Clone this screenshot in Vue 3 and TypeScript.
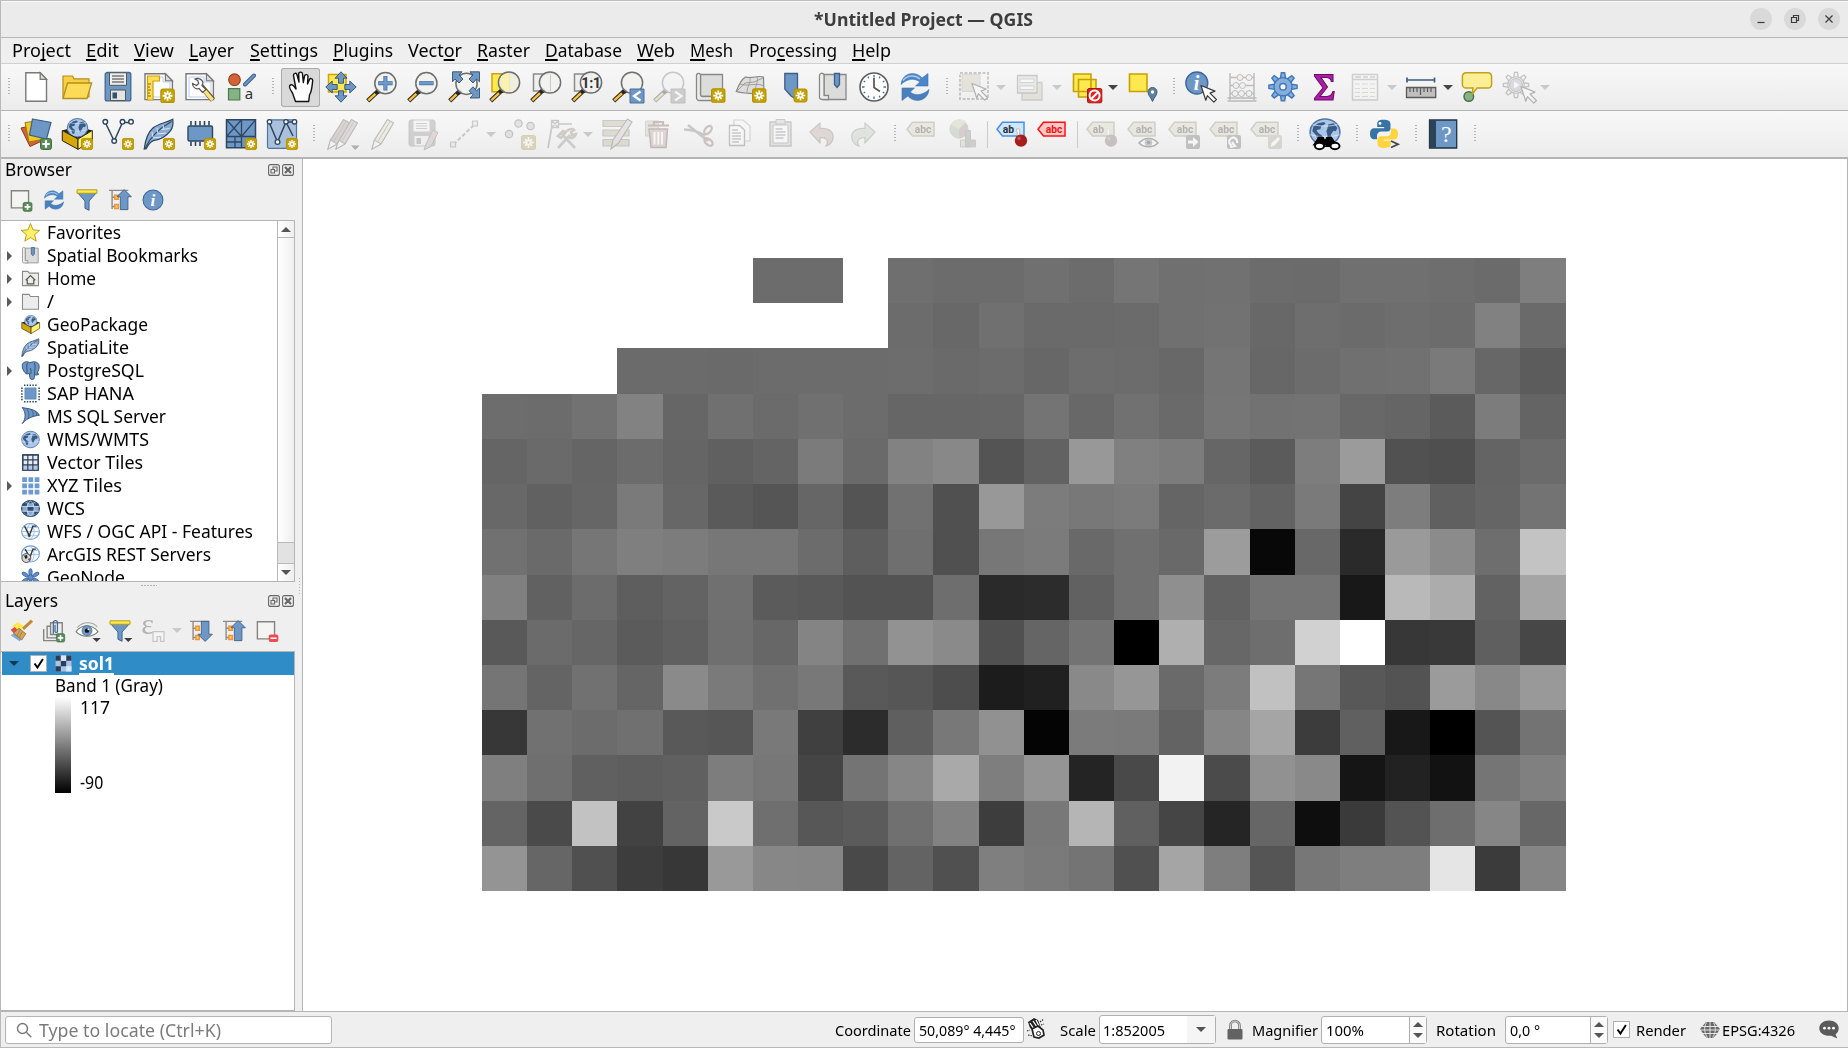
<script setup lang="ts">
import type { Directive } from 'vue'

// Sets a label in exactly the given width, whatever the metrics of the installed font.
const vFit: Directive<HTMLElement, number> = {
  mounted(el, binding) {
    const natural = el.getBoundingClientRect().width
    el.style.width = `${binding.value}px`
    el.style.transform = `scaleX(${binding.value / natural})`
  },
}

interface MenuItem { pre: string; key: string; post: string; w: number }
const menus: MenuItem[] = [
  { pre: 'Pro', key: 'j', post: 'ect', w: 59 },
  { pre: '', key: 'E', post: 'dit', w: 33 },
  { pre: '', key: 'V', post: 'iew', w: 40 },
  { pre: '', key: 'L', post: 'ayer', w: 45 },
  { pre: '', key: 'S', post: 'ettings', w: 68 },
  { pre: '', key: 'P', post: 'lugins', w: 60 },
  { pre: 'Vect', key: 'o', post: 'r', w: 54 },
  { pre: '', key: 'R', post: 'aster', w: 53 },
  { pre: '', key: 'D', post: 'atabase', w: 77 },
  { pre: '', key: 'W', post: 'eb', w: 38 },
  { pre: '', key: 'M', post: 'esh', w: 43 },
  { pre: 'Pro', key: 'c', post: 'essing', w: 88 },
  { pre: '', key: 'H', post: 'elp', w: 39 },
]

// ---- icon parts -------------------------------------------------------
const star = (x: number, y: number, s: number): string =>
  `<g transform="translate(${x} ${y}) scale(${s / 14})"><rect x=".5" y=".5" width="13" height="13" rx="2" fill="#c4a000" stroke="#b39200"/><path d="M7 2.2v9.6M2.2 7h9.6M3.8 3.8l6.4 6.4M10.2 3.8l-6.4 6.4" stroke="#fff" stroke-width="1.7"/><circle cx="7" cy="7" r="1.1" fill="#c4a000"/></g>`
const plus = (x: number, y: number, s: number): string =>
  `<g transform="translate(${x} ${y}) scale(${s / 12})"><rect x=".5" y=".5" width="11" height="11" rx="2" fill="#5a8c5a" stroke="#3f6f45"/><path d="M6 2.3v7.4M2.3 6h7.4" stroke="#fff" stroke-width="2.2"/></g>`
const lens = (cx = 19.4, cy = 12.2, fill = '#f2f2f1'): string =>
  `<path d="M${cx - 7} ${cy + 7.6}L1.7 29.9" stroke="#2b2b2b" stroke-width="4.4"/><path d="M${cx - 10} ${cy + 10.6}L2.3 29.3" stroke="#fcc33a" stroke-width="2.4"/><circle cx="${cx - 7}" cy="${cy + 8.2}" r="2.4" fill="#222"/><circle cx="${cx}" cy="${cy}" r="10.6" fill="${fill}" fill-opacity=".9" stroke="#6e6e6c" stroke-width="1.5"/>`
const cursor = (x: number, y: number): string =>
  `<path transform="translate(${x} ${y})" d="M0 0l14 5.6-5 2 6.4 6.4-2.6 2.6-6.4-6.4-1.6 4.6z" fill="#fff" stroke="#3a3a3a" stroke-width="1.2" stroke-linejoin="round"/>`
const page = `<path d="M5.8 1.8h14.4l6.3 6.5v21.9H5.8z" fill="#fff" stroke="#797977" stroke-width="1.4"/><path d="M20.2 1.8v6.5h6.3z" fill="#ddd" stroke="#797977" stroke-width="1.3"/>`
const widePage = `<path d="M2 2.8h20.4l7 7v18.8H2z" fill="#fff" stroke="#797977" stroke-width="1.4"/><path d="M22.4 2.8v7h7z" fill="#ddd" stroke="#797977" stroke-width="1.2"/><path d="M5 6h15v5h7v15H5z" fill="#fff" stroke="#b9cdf2"/>`
const tag = (label: string, fill: string, stroke: string, ink: string): string =>
  `<path d="M1 11.2L6.5 4.200H28V18H6.5z" fill="${fill}" stroke="${stroke}" stroke-width="1.5"/><text x="${label === 'ab' ? 12.5 : 17}" y="14.8" font-family="Roboto, sans-serif" font-size="10.3" font-weight="700" text-anchor="middle" fill="${ink}">${label}</text>`
const pin = (c: string): string =>
  `<path d="M23.6 17v-5.3a1.7 1.7 0 0 0-3.2 0l1 5" fill="#fff" stroke="#c4c4c4" stroke-width="1.2"/><circle cx="25" cy="22.6" r="6.2" fill="${c}"/><circle cx="23" cy="20.4" r="1.8" fill="#fff" opacity=".25"/>`
const globe = (cx: number, cy: number, rx: number, ry: number): string =>
  `<g transform="translate(${cx} ${cy}) scale(${rx / 10} ${ry / 10})"><circle r="9.6" fill="#a9c6e8" stroke="#5276a5" stroke-width="1"/><path d="M-7.5-4l3-2.5 4-1 .8 1.5-2.6 1.5-.7 2.5-2.5.5 1 2 2.5 2-1 3.5-1.5.5-1.5-4.5-2.2-2.500zM2-5.500l3.500-1 2.500 3.500-1 2.500-1.500-.5-1.500 2.500-.8 3-1.500-1.500-.8-3.500.8-2.500z" fill="#3b5b87"/><path d="M-9.600 2C-4 4 4 4 9.600 2M-8-5.500C-3-4 3-4 8-5.500" stroke="#e4eefa" stroke-width=".5" fill="none"/></g>`
const feather = `<path d="M1.2 31c1.2-9.4 3.3-16.4 9-21.2C15.2 5.6 23 4.8 29.8 1.200c.6 5.300.4 8.300-2.400 11.700-3.800 5-9.200 8.800-17 9.700-4 1.700-5.400 4.400-7.200 8.100z" fill="#89aad2" stroke="#2f4660" stroke-width="1.2"/><path d="M2 30.500C6.600 20 15 11 28.500 3.500" fill="none" stroke="#2f4660" stroke-width="1.1"/><path d="M10 20l8-1M14 16l9-1M18.500 11.500l8-1M9 14l1 5M14 9.500l.5 5M20 7l.5 3.500" stroke="#dce8f6" stroke-width="1" fill="none"/>`
const box = `<path d="M1.3 12.5L17 21l14.300-8.500L16 8z" fill="#222"/>${globe(16.5, 9.8, 10.6, 9.6)}<path d="M1.300 12.500L17 21v10.300L1.300 22.700z" fill="#d6a806" stroke="#2a2205"/><path d="M17 21l14.300-8.500v10.200L17 31.300z" fill="#fff271" stroke="#2a2205"/>`
const vee = `<path d="M3.3 4.5L12.2 23 20.500 4.500H29" fill="none" stroke="#2f4660" stroke-width="1.5"/><g fill="#fff" stroke="#2f4660" stroke-width="1.4"><circle cx="3.3" cy="3.8" r="2.3"/><circle cx="12.2" cy="23" r="2.3"/><circle cx="20.5" cy="3.8" r="2.3"/><circle cx="29" cy="3.8" r="2.3"/></g>`
const refresh = `<path d="M2 13.500C2.500 5.500 10 .8 17.500 3.200c2.400.8 4 2 5.500 3.800l6-4.500V15H16.500l4.300-4C15 6.200 7.500 8.300 2 13.500z" fill="#4a86c8" stroke="#3a73b3" stroke-width=".6"/><path d="M30 18.500C29.500 26.500 22 31.200 14.500 28.800c-2.400-.8-4-2-5.500-3.800l-6 4.500V17H15.500l-4.300 4c5.800 4.800 13.300 2.700 18.800-2.500z" fill="#4a7fbd" stroke="#3a73b3" stroke-width=".6"/><path d="M4 9.500C8 4 16 3.500 21 8" fill="none" stroke="#a9c9ea" stroke-width="1.5"/>`
const arrow4 = (s: string): string =>
  `<g fill="#6d97c4" stroke="#34506f" stroke-width=".9">${s}</g>`
const pencil = (x: number, c = '#d8c0a0'): string =>
  `<g transform="translate(${x} 0)"><path d="M1 31l2.500-9L16.500 1.500l6 3.500L10 26z" fill="${c}" stroke="#555" stroke-width="1.2"/><path d="M1 31l2.500-9 6.500 4z" fill="#f6f6f6" stroke="#555"/><path d="M6.500 24L19 3.500" stroke="#777"/></g>`
const gear = (cx: number, cy: number, r: number, fill: string, stroke: string): string => {
  let teeth = ''
  for (let a = 0; a < 8; a++) {
    teeth += `<path transform="rotate(${a * 45})" d="M-2.500-8l.9-5.600h3.200l.9 5.600z" />`
  }
  return `<g transform="translate(${cx} ${cy}) scale(${r / 14})"><g fill="${fill}" stroke="${stroke}" stroke-width="1.4">${teeth}<circle r="8.7"/></g><circle r="8" fill="${fill}"/></g>`
}
const treeLines = `<path d="M0 2h28M4.500 2v27M4.500 12h5M4.500 25.500h5" stroke="#8a8a88" stroke-width="2" fill="none"/><path d="M8.500 9h5v6h-5zM8.500 22.500h5v6h-5z" fill="#ffd08a" stroke="#f5932a" stroke-width="2.2"/>`
const funnel = `<path d="M2 5h28L19 17.500V31l-6-3V17.500z" fill="#6d97c4" stroke="#3c6290" stroke-width="1.4"/><path d="M1.500 1.200h29v5h-29z" fill="#ffe94f" stroke="#b09a12" stroke-width="1.4"/>`

const icons: Record<string, string> = {
  new: page,
  open: `<path d="M2 26V5h9.500l1.500 2.800h15V26z" fill="#f6cf45" stroke="#b58f1d" stroke-width="1.2"/><path d="M2 27.500L6.500 12H30.600L26 27.500z" fill="#fcdb58" stroke="#b58f1d" stroke-width="1.3"/>`,
  save: `<path d="M3.200 3.500a2 2 0 0 1 2-2h21.600a2 2 0 0 1 2 2v24.400a2 2 0 0 1-2 2H5.200a2 2 0 0 1-2-2z" fill="#6d97c4" stroke="#46668c" stroke-width="1.3"/><path d="M7.500 1.800h17v12.500h-17z" fill="#efefee" stroke="#555"/><path d="M10 5h12M10 8h12M10 11h12" stroke="#777" stroke-width="1.3"/><path d="M8.500 19h15v10.500h-15z" fill="#e4e4e2" stroke="#555"/><path d="M10.500 21.500h4.500v6h-4.500z" fill="#35506f"/>`,
  newlayout: `${widePage}<path d="M4.500 5h12v5H10v19H4.500z" fill="#ffdf55" stroke="#d0a012" stroke-width="1.2"/><path d="M5 13h3M5 16h2M5 19h3M5 22h2M5 25h3" stroke="#8a6c00"/>${star(17.3, 17.5, 14.5)}`,
  layoutmgr: `${widePage}<path d="M17 15l12 14" stroke="#6b5b1e" stroke-width="5.500"/><path d="M20 19l8.500 10" stroke="#fbe08a" stroke-width="3.500"/><path d="M11 8c3-1.500 7 0 8 3.500l-1 3 4 4-3.500 3-3.500-4c-3 1-6.500-1-6.500-5l4 2 2.200-2-1-3z" fill="#fff" stroke="#555" stroke-width="1.2"/>`,
  style: `<circle cx="9.500" cy="8.700" r="5.800" fill="#d2643a" stroke="#96401d" stroke-width="1.2"/><path d="M20 13.500L29 4.500" stroke="#3a5c88" stroke-width="4" stroke-linecap="round"/><path d="M20 13.500L29 4.500" stroke="#6d97c4" stroke-width="2.200" stroke-linecap="round"/><path d="M3.500 17.700h11.300V29H3.500z" fill="#84b384" stroke="#4c7a4c" stroke-width="1.2"/><text x="24" y="28.400" font-family="Noto Sans, sans-serif" font-size="15" text-anchor="middle" fill="#333">a</text>`,
  pan: `<path d="M11.500 30.500L8.500 22C6.500 19 4.500 16 5.800 14.500s3.500-.5 4.700 1.500l1.500 2L9.500 4.500c-.3-2.500 3-3 3.500-.7L15 11l-.3-8c0-2.500 3.500-2.500 3.800 0l.8 8.500L20.500 5c.5-2 3.500-1.700 3.500.4L23.500 13l2-4.500c.8-1.800 3.400-1 3.200 1.200C28 15 28 20 25.500 24l-.8 6.500z" fill="#fff" stroke="#111" stroke-width="1.4" stroke-linejoin="round"/>`,
  pansel: `<path d="M3.500 3.500h17.500v17.500h-17.500z" fill="#ffe94f" stroke="#cfa400" stroke-width="1.5"/>${arrow4('<path d="M16 .8l6 6.400h-3.500v5h-5v-5H10zM16 31.200l6-6.400h-3.500v-5h-5v5H10zM.8 16l6.400-6v3.500h5v5h-5V22zM31.200 16l-6.400-6v3.500h-5v5h5V22z"/>')}`,
  zoomin: `${lens()}<path d="M19.400 5v14.400M12.200 12.200h14.400" stroke="#40699c" stroke-width="4"/><path d="M19.400 5.600v13.200M12.800 12.200h13.200" stroke="#6d9bd0" stroke-width="2.600"/>`,
  zoomout: `${lens()}<path d="M12.200 12.200h14.400" stroke="#40699c" stroke-width="4"/><path d="M12.800 12.200h13.200" stroke="#6d9bd0" stroke-width="2.600"/>`,
  zoomfull: `${lens(18.5, 12.8)}${arrow4('<path d="M4.500 .8h9.500l-3 3.200 4 4-4 4-4-4-2.500 2.800zM31.500 .8h-9.500l3 3.200-4 4 4 4 3.500-4 3 2.800zM31.500 27h-9.500l3-3.200-4-4 4-4 3.500 4 3-2.800z"/>')}`,
  zoomsel: `<path d="M3 2.800h17.500v18H3z" fill="#ffe94f" stroke="#cfa400" stroke-width="1.5"/>${lens(20, 11.5, '#f0eddc')}<path d="M12 5.500a10 10 0 0 1 8-3v17.700a9 9 0 0 1-7.500-4z" fill="#fdf3a6" opacity=".8"/>`,
  zoomlayer: `<path d="M3.500 3h17v17h-17z" fill="#efefee" stroke="#8b8b89" stroke-width="1.5"/>${lens(20, 11.5)}<path d="M20.500 3.500V20" stroke="#ccc"/>`,
  zoomnative: `<path d="M3.500 3h17v17h-17z" fill="#efefee" stroke="#8b8b89" stroke-width="1.5"/>${lens(20, 11.5)}<text x="20" y="16.700" font-family="Roboto, sans-serif" font-size="14.500" font-weight="700" letter-spacing="-.4" text-anchor="middle" fill="#333">1:1</text>`,
  zoomlast: `${lens(20, 11.8)}<path d="M18 18h14v14H18z" fill="#6d97c4" stroke="#4a709c"/><path d="M28.500 20.500L22 25l6.500 4.500" fill="none" stroke="#fff" stroke-width="2.200"/>`,
  zoomnext: `${lens(20, 11.8)}<path d="M18 18h14v14H18z" fill="#888" stroke="#666"/><path d="M22 20.500l6.500 4.500-6.500 4.500" fill="none" stroke="#fff" stroke-width="2.200"/>`,
  mapview: `<path d="M6.500 3.500h22v22h-22z" fill="#dcdcda" stroke="#888" stroke-width="1.3"/><path d="M6.500 3.500c-1-1.500-4-1.500-4 1V26c0 2 1 3.500 3 3.500h19v-4H8c0 0-1.500 0-1.500-2z" fill="#ececea" stroke="#888" stroke-width="1.3"/>${star(17, 17.3, 14.5)}`,
  view3d: `<path d="M1.300 20.500C4 13 7 8 10.500 6c6 2 12-2 18 0L29 25c-8-4-18-1.500-27.700-4.500z" fill="#dedddb" stroke="#888" stroke-width="1.2"/><path d="M5 13c8 3 16-2 24 2M15 6.500c1 6-3 8-3 15M22 5.500c2 6-3 9-1 16M2 20l8-8 9-1 9-4" fill="none" stroke="#999" stroke-width=".9"/>${star(17, 17.3, 14.5)}`,
  bookmark: `<path d="M8.800 2.500h12.700v26.500l-6.500-4-6.200-7z" fill="#6d97c4" stroke="#3e5f87" stroke-width="1.3"/>${star(17.5, 17.5, 14)}`,
  bookmarks: `<path d="M7 3.500h22v25H7z" fill="#dcdcda" stroke="#888" stroke-width="1.3"/><path d="M7 3.500c-1.500-2-4.500-1.500-4.500 1V26c0 1.500 1 2.500 3 2.500h6v-4H7z" fill="#f0f0ee" stroke="#888" stroke-width="1.3"/><path d="M17.500 2.500h5v11l-2.500 3-2.500-3z" fill="#6d97c4" stroke="#3e5f87" stroke-width="1.3"/>`,
  clock: `<circle cx="16" cy="16" r="14" fill="#fff" stroke="#5d5d5b" stroke-width="1.6"/><g stroke="#3b6ea8" stroke-width="2"><path d="M16 4v2.500M16 25.500V28M4 16h2.500M25.500 16H28M10 5.600l.8 1.600M22 5.600l-.8 1.600M5.600 10l1.600.8M5.600 22l1.600-.8M26.400 10l-1.600.8M26.400 22l-1.600-.8M10 26.400l.8-1.600M22 26.400l-.8-1.600" stroke-width="1.3"/></g><path d="M16 7v9.500l6 4" fill="none" stroke="#555" stroke-width="1.7"/>`,
  refresh,
  select: `<path d="M2 2h28v26H2z" fill="none" stroke="#777" stroke-width="2" stroke-dasharray="3 1.5"/><path d="M4 3.500h18v17H4z" fill="#cfc69a" stroke="#aaa48a"/>${cursor(14, 12.5)}`,
  selectform: `<path d="M8 11.500h20v17.500H8z" fill="#cfc69a" stroke="#888" stroke-width="1.3"/><path d="M3.500 4.500h19.500v17.500H3.500z" fill="#d4d4d2" stroke="#777" stroke-width="1.3"/><path d="M6 8h14v3.500H6zM6 15h14v3.500H6z" fill="#fff" stroke="#999"/>`,
  deselect: `<path d="M3.500 3h17.500v17.500H3.500zM8.500 8.500H26V26H8.500z" fill="#fde94f" stroke="#c9a000" stroke-width="1.6"/><rect x="17.500" y="17.500" width="14.300" height="14.300" rx="1.500" fill="#dd2222" stroke="#a81414"/><circle cx="24.600" cy="24.600" r="5" fill="none" stroke="#fff" stroke-width="2"/><path d="M21.200 28l6.800-6.800" stroke="#fff" stroke-width="2"/>`,
  selectloc: `<path d="M3.500 3H21v17.500H3.500z" fill="#fde94f" stroke="#c9a000" stroke-width="1.6"/><path d="M26.500 30.500c-1.500-4-4.500-6-4.500-9.500a4.500 4.500 0 0 1 9 0c0 3.500-3 5.500-4.500 9.500z" fill="#5d819e" stroke="#3f5c74"/><circle cx="26.500" cy="21" r="1.700" fill="#fff"/>`,
  identify: `<circle cx="11.800" cy="12" r="11" fill="#6d97c4" stroke="#3e659c" stroke-width="1.3"/><text x="11.500" y="19" font-family="Liberation Serif, serif" font-style="italic" font-weight="700" font-size="20" text-anchor="middle" fill="#fff">i</text>${cursor(16, 14.5)}`,
  abacus: `<path d="M4 2v27M28 2v27M1.500 30h29M1.500 27h29M4 6.500h24M4 14.500h24M4 22.500h24" stroke="#555" stroke-width="1.5" fill="none"/><g fill="#eee" stroke="#555"><circle cx="14" cy="6.500" r="3" stroke="#a33"/><circle cx="23" cy="6.500" r="3" stroke="#a33"/><circle cx="10" cy="14.500" r="3"/><circle cx="16.500" cy="14.500" r="3"/><circle cx="9" cy="22.500" r="3"/><circle cx="15.500" cy="22.500" r="3"/><circle cx="23" cy="22.500" r="3"/></g>`,
  gear: `${gear(16, 15.8, 14.5, '#85aedd', '#3f78bb')}<circle cx="16" cy="15.800" r="3.300" fill="#f4f4f4" stroke="#3f78bb" stroke-width="1.5"/>`,
  sigma: `<path d="M6.500 3.500h18.500v7h-1.700C23 7.500 21.500 6.500 18 6.500H13L19.500 16 12 25.500h7c3.500 0 5-1.500 6-5h1.200L25 29H6.500v-1.500L15 16.800 6.500 5z" fill="#ad1ea8" stroke="#6f0d6b" stroke-width="1.1"/>`,
  table: `<path d="M3.500 3.500h25V29h-25z" fill="#f7f7f6" stroke="#888" stroke-width="1.5"/><path d="M3.500 8.500h25M6 6h6M14 6h5M21 6h5" stroke="#888" stroke-width="1.7"/><path d="M6 13h5M13 13h6M21 13h5M6 17.500h5M13 17.500h6M21 17.500h5M6 21.500h5M13 21.500h6M21 21.500h5M6 25.500h5M13 25.500h6M21 25.500h5" stroke="#aaa" stroke-width="1.2"/>`,
  ruler: `<path d="M2 9h27.500M2 6.500v5M29.500 6.500v5" stroke="#3a5c80" stroke-width="1.7"/><path d="M1.500 16.500h29.200v10H1.500z" fill="#bfbfbd" stroke="#5a5a58" stroke-width="1.3"/><path d="M5 17v4M8.500 17v4M12 17v4M15.500 17v7M19 17v4M22.500 17v4M26 17v4" stroke="#5a5a58" stroke-width="1.2"/>`,
  tip: `<circle cx="7.800" cy="25.500" r="4.800" fill="#84b384" stroke="#4d6b4d" stroke-width="1.4"/><path d="M5 1.800h22a3.600 3.600 0 0 1 3.600 3.600v8a3.600 3.600 0 0 1-3.600 3.600H16l-5 6.500 1-6.500H5a3.600 3.600 0 0 1-3.600-3.600v-8A3.600 3.600 0 0 1 5 1.800z" fill="#fcee94" stroke="#bfa11d" stroke-width="1.5"/>`,
  action: `${gear(14, 14, 13, '#eee', '#666')}<circle cx="14" cy="14" r="6.500" fill="#9ab0c9" stroke="#666"/><path d="M12 10.500l5.500 3.500-5.500 3.500z" fill="#fff"/>${cursor(19, 15.5)}`,

  datasource: `<path d="M1 10l18-4 5 16-14 6.500z" fill="#d2643a" stroke="#8c3a1a"/><path d="M5 4.500l17-2v19L9 24z" fill="#f2c91f" stroke="#9a7c08"/><path d="M12.500 1l18.500 3.500-4.500 16.500L9.500 17z" fill="#6d97c4" stroke="#3c5f8a" stroke-width="1.2"/>${plus(20, 20, 12)}`,
  geopackage: box + star(20, 20, 12),
  shapefile: vee + star(20, 20, 12),
  spatialite: feather + star(20, 20, 12),
  memory: `<path d="M7 3v4.500M11.500 3v4.500M16 3v4.500M20.500 3v4.500M25 3v4.500M7 23.500V28M11.500 23.500V28M16 23.500V28" stroke="#2f4660" stroke-width="1.6"/><rect x="4" y="8" width="24.500" height="15" rx="1.500" fill="#6d97c4" stroke="#2f4660" stroke-width="1.4"/>${star(20, 20, 12)}`,
  mesh: `<path d="M1.500 1.800h29v28h-29z" fill="#6d97c4" stroke="#2f4660" stroke-width="1.5"/><path d="M1.500 18.500h29M16.500 1.800v28M1.500 1.800l15 16.700M16.500 1.800l-15 16.700M30.500 1.800l-14 16.700M10 18.500v11M1.500 24h15" stroke="#2f4660" stroke-width="1.3"/>${star(20, 20, 12)}`,
  virtual: `<rect x="1.500" y="1.800" width="29" height="28.500" rx="1.500" fill="#a9c1dd" stroke="#51749f" stroke-width="1.2"/><path d="M3 4l8.500 20L20 4l8 0M20 4l7 14" fill="none" stroke="#2f4660" stroke-width="1.5"/><g fill="#fff" stroke="#2f4660" stroke-width="1.3"><circle cx="3.500" cy="3.800" r="2.200"/><circle cx="11.500" cy="24" r="2.400"/><circle cx="20" cy="3.800" r="2.200"/><circle cx="28.500" cy="3.800" r="2.200"/></g>${star(20, 20, 12)}`,
  pencils: `${pencil(10, '#c8a4a0')}${pencil(2, '#b98f80')}<path d="M26 27.500h8.500l-4.200 4.500z" fill="#333"/>`,
  pencil: pencil(5, '#e4dcb4'),
  saveedits: `<path d="M2 4a2 2 0 0 1 2-2h22a2 2 0 0 1 2 2v22a2 2 0 0 1-2 2H4a2 2 0 0 1-2-2z" fill="#8e8e92" stroke="#777"/><path d="M6.500 2.500h16v11h-16z" fill="#f3f3f3"/><path d="M9 5.500h11M9 8h11M9 10.500h11" stroke="#888"/><path d="M7.500 18h14v9.500h-14z" fill="#eee"/><path d="M9.500 20H14v6H9.500z" fill="#777"/><path d="M17 32l2-6 7-14 5 2.500-7 14z" fill="#c5a59a" stroke="#666"/>`,
  digitize: `<path d="M5.500 26.500l22-21" stroke="#777" stroke-width="2" stroke-dasharray="4 2"/><path d="M2.500 24h5v5h-5zM24.500 3h5v5h-5z" fill="#ddd" stroke="#777" stroke-width="1.2"/>`,
  points: `<g fill="#b5c5b4" stroke="#666" stroke-width="1.2"><circle cx="14.500" cy="5.500" r="3.700"/><circle cx="5" cy="16" r="3.700"/><circle cx="26.500" cy="8" r="3.700"/></g>${star(17, 17, 15)}`,
  vertex: `<path d="M7 8L3 30M10 6h17" stroke="#777" stroke-width="1.7"/><path d="M6.500 2.500h7v7h-7zM6.500 2.500l7 7M13.500 2.500l-7 7" fill="#eee" stroke="#777" stroke-width="1.3"/><path d="M13 30l12-13M16 15l14 15M13 18l5-5 3 1-5 6zM22 13c2-3 6-2 7-1l-3 2 1 3 4-1c-1 4-5 5-7 3" stroke="#8a8670" stroke-width="2.6" fill="none"/>`,
  editattr: `<path d="M2 2.500h26v6H2zM2 12h26v6H2zM2 21.500h26v6.500H2z" fill="#b9b46c" stroke="#777" stroke-width="1.2"/><g transform="translate(8 0)"><path d="M2 31l2-9L18.500 1l4.500 3-13.500 21z" fill="#d7c0b8" stroke="#555" stroke-width="1.2"/></g>`,
  trash: `<path d="M3.500 3h13v15h-13z" fill="#ccc696" stroke="#999"/><path d="M6 7.500h21M12 7V4h9v3" stroke="#9c4a4a" stroke-width="2.2" fill="none"/><path d="M7 11h18.500L24 29.500H9z" fill="#c39a9a" stroke="#8a4444" stroke-width="1.5"/><path d="M12.500 14v12.500M16.300 14v12.500M20 14v12.500" stroke="#fff" stroke-width="2"/>`,
  cut: `<path d="M1 11.500c7 0 14 1.500 21 6.500M5 7l20 16" stroke="#777" stroke-width="2.5" fill="none"/><g fill="none" stroke="#9a5f5f" stroke-width="2.3"><ellipse cx="25" cy="12" rx="4.800" ry="2.800" transform="rotate(-50 25 12)"/><ellipse cx="25.500" cy="24" rx="4.800" ry="2.800" transform="rotate(40 25.500 24)"/></g>`,
  copy: `<path d="M10 2h9l7 6v15H10z" fill="#fafafa" stroke="#999" stroke-width="1.2"/><path d="M5.500 7.500h10l5 4.500v15.500h-15z" fill="#fff" stroke="#666" stroke-width="1.4"/><path d="M8 12h6M8 15h9M8 18h9M8 21h9M8 24h7" stroke="#777" stroke-width="1.3"/>`,
  paste: `<path d="M5 4h21v24H5z" fill="#c8c4b2" stroke="#777" stroke-width="1.4"/><path d="M8 7h15v18H8z" fill="#fff" stroke="#777"/><path d="M11 1.500h9V6h-9z" fill="#ccc" stroke="#777"/><path d="M10.500 11h7M10.500 14h10M10.500 17h10M10.500 20h8" stroke="#777" stroke-width="1.3"/>`,
  undo: `<path d="M4 14l10-9v5.500c10-.5 14 4 13 10-.5 4-4 7-7 7.500 2.500-3.500 2.500-8.500-6-8.500V25z" fill="#c9a090" stroke="#8d6f60" stroke-width="1.2"/>`,
  redo: `<path d="M28 14L18 5v5.500c-10-.5-14 4-13 10 .5 4 4 7 7 7.500-2.500-3.500-2.500-8.500 6-8.500V25z" fill="#bfcabb" stroke="#7b8a77" stroke-width="1.2"/>`,
  label: tag('abc', '#d8d2a0', '#8f8b62', '#333'),
  diagram: `<circle cx="12" cy="11" r="9" fill="#b88080" stroke="#888"/><path d="M12 11V20A9 9 0 0 1 4 7z" fill="#8cb78c"/><path d="M12 11L4 7a9 9 0 0 1 15-3z" fill="#cfc884"/><path d="M13.500 22h5v7h-5z" fill="#d8cc7c" stroke="#888"/><path d="M18.500 12.500h5V29h-5z" fill="#5d9a84" stroke="#777"/><path d="M23.500 22h5v7h-5z" fill="#b97f7f" stroke="#888"/>`,
  pinlabel: tag('ab', '#cfe6fb', '#4a90e0', '#26323f') + pin('#a51d1d'),
  redlabel: tag('abc', '#ffc9c9', '#ff1010', '#f01414'),
  pingray: tag('ab', '#d8d2a0', '#8f8b62', '#333') + pin('#8d6060'),
  labeleye: tag('abc', '#d8d2a0', '#8f8b62', '#333') + `<path d="M12 25c5-6 14-6 19 0-5 5-14 5-19 0z" fill="#fff" stroke="#333" stroke-width="1.5"/><circle cx="21.500" cy="24.500" r="3.800" fill="#67819b"/><circle cx="21.500" cy="24.500" r="1.600" fill="#111"/>`,
  labelmove: tag('abc', '#d8d2a0', '#8f8b62', '#333') + `<rect x="18" y="17" width="14" height="14" rx="2" fill="#666"/><path d="M20 22.500h5v-3.500l5.500 5-5.500 5v-3.500h-5z" fill="#fff"/>`,
  labelrot: tag('abc', '#d8d2a0', '#8f8b62', '#333') + `<rect x="18" y="17" width="14" height="14" rx="2" fill="#666"/><path d="M28 25a4 4 0 1 0-5 2.500M21 29l5-1-3-4" fill="none" stroke="#fff" stroke-width="2.2"/>`,
  labeledit: tag('abc', '#d8d2a0', '#8f8b62', '#333') + `<rect x="18" y="17" width="14" height="14" rx="2" fill="#a9a67c"/><path d="M20.500 29l1-4 7-6 1.500 2-5.500 6.500z" fill="#fff"/>`,
  metasearch: `${globe(16, 14, 15.5, 13.5)}<path d="M9.500 18.500h4l2.500 3 2.500-3h4l6 9H3.500z" fill="#000"/><path d="M6 24l4-5h5v9h2v-9h5l4 5v5H6z" fill="#000"/><g fill="#fff" stroke="#000" stroke-width="2"><ellipse cx="10.500" cy="28" rx="4.500" ry="3.200"/><ellipse cx="26" cy="28" rx="4.500" ry="3.200"/></g>`,
  python: `<path d="M15.500 1.800c-5.500 0-6.300 2-6.300 4.200v3h7v1.300H6.300C3 10.300 2 13 2 15.800c0 3 1.200 5.500 4.200 5.500H9v-3.500c0-2.500 1.800-4.300 4.500-4.300h6c2 0 3-1.500 3-3.200V6c0-3-2.500-4.200-7-4.200z" fill="#3873a6"/><circle cx="12" cy="5.400" r="1.400" fill="#fff"/><path d="M16.500 30c5.500 0 6.300-2 6.300-4.200v-3h-7v-1.300h9.900c3.300 0 4.300-2.700 4.300-5.500s-1.200-5.500-4.200-5.500H23V14c0 2.500-1.800 4.300-4.500 4.300h-6c-2 0-3 1.500-3 3.200v4.300c0 3 2.500 4.200 7 4.200z" fill="#ffd43c"/><path d="M23 23l7 3.200-7 3.300" fill="none" stroke="#444" stroke-width="1.8"/>`,
  help: `<path d="M2.500 2h27.200v28H2.500z" fill="#6d97c4" stroke="#20303f" stroke-width="1.3"/><path d="M2.500 2H9v28H2.500z" fill="#2c4259"/><text x="19.400" y="23.500" font-family="Liberation Serif, serif" font-size="24" text-anchor="middle" fill="#fff">?</text>`,

  additem: `<path d="M2 2.500h25v25H2z" fill="#f4f4f3" stroke="#83837f" stroke-width="2"/>${plus(18.5, 19, 14)}`,
  removeitem: `<path d="M2 2.500h25v25H2z" fill="#f4f4f3" stroke="#83837f" stroke-width="2"/><rect x="18.500" y="21" width="14" height="11" rx="3" fill="#ef4a50"/><path d="M21 26.500h9" stroke="#fff" stroke-width="2.2"/>`,
  funnel,
  funneldrop: `${funnel}<path d="M22 26h12l-6 6z" fill="#3d3d3d"/>`,
  collapse: `${treeLines}<path d="M22 .8l10.500 10.500h-5V30h-11V11.300h-5z" fill="#6d97c4" stroke="#3c5f8a" stroke-width="1.3"/>`,
  expand: `${treeLines}<path d="M22 31.200l10.500-10.500h-5V2h-11v18.700h-5z" fill="#6d97c4" stroke="#3c5f8a" stroke-width="1.3"/>`,
  info: `<circle cx="16" cy="16" r="14.500" fill="#6d97c4" stroke="#3e659c" stroke-width="1.5"/><text x="16" y="25" font-family="Liberation Serif, serif" font-style="italic" font-weight="700" font-size="25" text-anchor="middle" fill="#fff">i</text>`,
  brush: `<path d="M3 9l8-6 8 5-3 10z" fill="#ffe94f"/><path d="M1 14l6-4 6 7-5 5z" fill="#e14a4a"/><path d="M1 22l7-4 10 8-4 5z" fill="#7da8da"/><path d="M32 1L19 13" stroke="#c08a38" stroke-width="4.5"/><path d="M13 12l10 8-6 9L5 19z" fill="#d3a560" stroke="#94662a" stroke-width="1.2"/><path d="M15 14l-5 9M18 17l-5 9" stroke="#94662a"/>`,
  addgroup: `<path d="M1 13v17h18" fill="none" stroke="#83837f" stroke-width="2"/><path d="M6 9h17v17H6z" fill="#eee" stroke="#83837f" stroke-width="2"/><path d="M11 4h17v17H11z" fill="#eee" stroke="#83837f" stroke-width="2"/><path d="M15 20V4a3 3 0 0 1 6 0v13a2 2 0 0 1-3.500 0V7" fill="none" stroke="#3f6798" stroke-width="1.8"/>${plus(19, 19.5, 13)}`,
  eye: `<path d="M0 17C8 6 24 6 32 17 24 26 8 26 0 17z" fill="#fff" stroke="#77776f" stroke-width="1.5"/><path d="M2 11C10 2 24 2 31 10" fill="none" stroke="#a5a59f" stroke-width="1.5"/><circle cx="16" cy="15.500" r="7.300" fill="#7098c8" stroke="#46668c"/><circle cx="16" cy="15.500" r="3.200" fill="#111"/><circle cx="18" cy="13.500" r="1.300" fill="#fff"/><path d="M24 26h12l-6 6z" fill="#3d3d3d"/>`,
  epsilon: `<text x="8" y="20" font-family="Liberation Serif, serif" font-size="44" text-anchor="middle" fill="#444">ε</text><path d="M16 17h16v14h-5v-7h-5v7h-6z" fill="#fff" stroke="#777" stroke-width="1.8"/>`,

  fav: `<path d="M16 1l4.400 10.600 11 .8-8.500 7.200 2.700 11L16 24.500 6.400 30.600l2.700-11L.6 12.400l11-.8z" fill="#fff06a" stroke="#b8920c" stroke-width="1.5"/>`,
  home: `<path d="M2.500 4h9l2.500 3h15.500v21h-27z" fill="#ececeb" stroke="#8a8a88" stroke-width="1.8"/><path d="M8 19l8-8 8 8M10.500 18v7h11v-7" fill="none" stroke="#555" stroke-width="2"/>`,
  folder: `<path d="M2.500 4h11l2.500 3.500h13.500V29h-27z" fill="#ececeb" stroke="#8a8a88" stroke-width="1.8"/>`,
  gpkg: box,
  feather,
  postgres: `<path d="M3 4C7 0 12 1 15 3c5-3 13-2 15 3 2 6-1 11-3 15l3 1c-2 2-5 2-7 1l-1 7c-3 2-7 1-7-2l-1-7-4 1C5 20 0 10 3 4z" fill="#6d97c4" stroke="#2c4c75" stroke-width="1.5"/><path d="M11 3c-3 5 0 10-1 18M22 3c4 6 0 12 1 20M15 22c3 0 2-5 1-10" fill="none" stroke="#2c4c75" stroke-width="1.5"/>`,
  hana: `<path d="M6.500 6.500h19v19h-19z" fill="#6d97c4" stroke="#4f7cb0"/><path d="M5 2h23M5 30h23" stroke="#2f4660" stroke-width="2.6" stroke-dasharray="2.5 2.2"/><path d="M1.500 6v22M30.500 6v22" stroke="#2f4660" stroke-width="2.6" stroke-dasharray="2.5 2.2"/>`,
  mssql: `<path d="M2 1c12 2 24 3 29 13-10 1-20 4-29 14 7-9 6-20 0-27z" fill="#6d97c4" stroke="#2f4f79" stroke-width="1.5"/><path d="M10 3c4 6 4 12 2 17M17 4c4 5 4 9 3 13M24 7c3 4 3 6 2 8" fill="none" stroke="#2f4f79" stroke-width="1.2"/>`,
  wms: globe(16, 16, 15.5, 14.5),
  vtiles: `<path d="M3 3h26v26H3z" fill="#e6edf6" stroke="#2f3f5a" stroke-width="2"/><path d="M3 20h26v9H3z" fill="#b4cae4"/><path d="M3 11.500h26M3 20h26M11.500 3v26M20 3v26M3 3h26v26H3z" fill="none" stroke="#2f3f5a" stroke-width="2"/>`,
  xyz: `<path d="M2 2h8v8H2zM12.500 2h8v8h-8zM23 2h8v8h-8zM2 12.500h8v8H2zM12.500 12.500h8v8h-8zM23 12.500h8v8h-8zM2 23h8v8H2zM12.500 23h8v8h-8zM23 23h8v8h-8z" fill="#6d9bd0"/>`,
  wcs: `<ellipse cx="16" cy="16" rx="15" ry="13.500" fill="#86a9d4" stroke="#2f4660" stroke-width="2"/><path d="M10 13h12v7H10zM3 7h7v5H1zM22 7h7l2 5h-9zM3 21h7v6zM22 21h7l-6 6zM11 2.500h10V7H11z" fill="#2f4a6d"/><path d="M1 12.500h30M1 20.500h30M16 3c-8 7-8 19 0 26M16 3c8 7 8 19 0 26" stroke="#d8e5f4" stroke-width="1.3" fill="none"/>`,
  wfs: `<ellipse cx="16" cy="16" rx="15" ry="13.500" fill="#f5f9fe" stroke="#6f9bd0" stroke-width="1.8"/><path d="M1 16h30M4 9h24M4 23h24M16 3c-8 7-8 19 0 26M16 3c8 7 8 19 0 26" stroke="#9fbfe4" stroke-width="1.5" fill="none"/><path d="M6 7l8 16 6-16h6" stroke="#333" stroke-width="2.2" fill="none"/><circle cx="14" cy="23" r="2" fill="#333"/>`,
  arcgis: `<ellipse cx="16" cy="15" rx="15" ry="13.500" fill="#f5f9fe" stroke="#6f9bd0" stroke-width="1.8"/><path d="M1 16h30M4 9h24M16 3c8 7 8 19 0 26" stroke="#9fbfe4" stroke-width="1.5" fill="none"/><path d="M7 7l8 14 5-14h5" stroke="#333" stroke-width="2.2" fill="none"/><circle cx="9" cy="22" r="7.500" fill="#d5d5d5" stroke="#444" stroke-width="1.5"/><path d="M5 18l5-1 1 4-3 3zM12 24l3-2-1 5z" fill="#222"/>`,
  geonode: `<g fill="#5f8fca" stroke="#2f5588"><ellipse cx="16" cy="7" rx="3" ry="6"/><ellipse cx="16" cy="25" rx="3" ry="6"/><ellipse cx="7" cy="11" rx="3" ry="6" transform="rotate(-60 7 11)"/><ellipse cx="25" cy="11" rx="3" ry="6" transform="rotate(60 25 11)"/><ellipse cx="7" cy="21" rx="3" ry="6" transform="rotate(60 7 21)"/><ellipse cx="25" cy="21" rx="3" ry="6" transform="rotate(-60 25 21)"/><circle cx="16" cy="16" r="4.500"/></g>`,
  raster: `<path d="M1 1h30v30H1z" fill="#a9c4e6"/><path d="M1 1h10v10H1zM21 1h10v10H21zM11 11h10v10H11zM1 21h10v10H1z" fill="#2c3e57"/><path d="M21 21h10v10H21z" fill="#dce7f5"/><path d="M11 1h10v10H11z" fill="#dce7f5"/>`,
}

// ---- toolbars ---------------------------------------------------------
interface Tool { t: 'h' | 'h0' | 'b' | 'a' | 's'; icon?: string; off?: boolean; on?: boolean }
const b = (s: string, off = false): Tool[] => s.split(' ').map((icon) => ({ t: 'b', icon, off, on: icon === 'pan' }))
const handle: Tool = { t: 'h' }
const firstHandle: Tool = { t: 'h0' }
const drop = (off: boolean): Tool => ({ t: 'a', off })
const sep: Tool = { t: 's' }

const toolbars: Tool[][] = [
  [
    firstHandle, ...b('new open save newlayout layoutmgr style'), handle,
    ...b('pan pansel zoomin zoomout zoomfull zoomsel zoomlayer zoomnative zoomlast'), ...b('zoomnext', true),
    ...b('mapview view3d bookmark bookmarks clock refresh'), handle,
    ...b('select', true), drop(true), ...b('selectform', true), drop(true), ...b('deselect'), drop(false), ...b('selectloc'), handle,
    ...b('identify'), ...b('abacus', true), ...b('gear sigma'), ...b('table', true), drop(true), ...b('ruler'), drop(false),
    ...b('tip'), ...b('action', true), drop(true),
  ],
  [
    firstHandle, ...b('datasource geopackage shapefile spatialite memory mesh virtual'), handle,
    ...b('pencils pencil saveedits digitize', true), drop(true), ...b('points vertex', true), drop(true),
    ...b('editattr trash cut copy paste undo redo', true), handle,
    ...b('label diagram', true), sep, ...b('pinlabel redlabel'), sep,
    ...b('pingray labeleye labelmove labelrot labeledit', true), handle,
    ...b('metasearch'), handle, ...b('python'), handle, ...b('help'), handle,
  ],
]

// ---- docks ------------------------------------------------------------
interface Node { icon: string; label: string; w: number; open?: boolean }
const nodes: Node[] = [
  { icon: 'fav', label: 'Favorites', w: 74 },
  { icon: 'bookmarks', label: 'Spatial Bookmarks', w: 151, open: true },
  { icon: 'home', label: 'Home', w: 49, open: true },
  { icon: 'folder', label: '/', w: 7, open: true },
  { icon: 'gpkg', label: 'GeoPackage', w: 101 },
  { icon: 'feather', label: 'SpatiaLite', w: 82 },
  { icon: 'postgres', label: 'PostgreSQL', w: 97, open: true },
  { icon: 'hana', label: 'SAP HANA', w: 87 },
  { icon: 'mssql', label: 'MS SQL Server', w: 119 },
  { icon: 'wms', label: 'WMS/WMTS', w: 102 },
  { icon: 'vtiles', label: 'Vector Tiles', w: 96 },
  { icon: 'xyz', label: 'XYZ Tiles', w: 75, open: true },
  { icon: 'wcs', label: 'WCS', w: 38 },
  { icon: 'wfs', label: 'WFS / OGC API - Features', w: 206 },
  { icon: 'arcgis', label: 'ArcGIS REST Servers', w: 164 },
  { icon: 'geonode', label: 'GeoNode', w: 78 },
]
interface DockTool { icon: string; off?: boolean }
const browserTools: DockTool[] = ['additem', 'refresh', 'funnel', 'collapse', 'info'].map((icon) => ({ icon }))
const layerTools: DockTool[] = [
  { icon: 'brush' }, { icon: 'addgroup' }, { icon: 'eye' }, { icon: 'funneldrop' },
  { icon: 'epsilon', off: true }, { icon: '' }, { icon: 'expand' }, { icon: 'collapse' }, { icon: 'removeitem' },
]

// ---- raster layer: one grey byte per cell, "--" is no data ---------------
const cells: string[] = [
  '-- -- -- -- -- -- 6c 6c -- 6f 6c 6c 70 6c 75 70 71 6c 6b 70 70 6e 6b 7e',
  '-- -- -- -- -- -- -- -- -- 6c 68 70 6a 6a 6b 70 72 68 6e 6b 6e 6c 81 6a',
  '-- -- -- 6b 6b 6a 6c 6c 6c 6d 6a 6c 67 6d 6c 68 75 67 6c 70 71 7a 67 5c',
  '6d 6c 72 82 66 70 6b 70 6c 66 66 67 74 68 71 6a 76 72 73 68 65 5b 7c 64',
  '65 6a 65 6c 65 60 64 7b 6a 82 88 54 62 98 80 7c 66 5b 7d 9b 51 4f 64 6b',
  '68 61 66 7a 67 5a 55 66 54 71 50 98 7c 78 7b 65 6b 63 7a 44 7d 60 65 73',
  '71 6a 76 7f 7c 77 77 6c 5e 6f 50 77 7b 69 70 69 9c 08 68 2a 9a 8b 6e c3',
  '80 61 6c 5e 63 70 5b 59 53 53 6e 2a 2c 61 70 8f 62 74 74 18 b9 ac 62 a5',
  '59 6b 66 5b 60 6f 67 84 70 92 8a 50 65 73 00 af 67 6e d1 ff 37 39 5f 47',
  '75 64 71 65 8a 7a 70 78 59 56 4d 1c 20 89 96 6a 7c c1 76 58 53 9b 88 99',
  '37 71 6c 70 59 56 79 40 2c 5f 78 91 04 7b 7a 63 86 a5 3c 60 18 00 54 73',
  '7f 6f 60 5e 60 7d 77 45 74 86 a9 7e 94 24 49 f2 4b 91 89 15 22 12 75 80',
  '64 4a c2 42 63 c9 6f 57 5b 70 82 3d 78 b5 60 45 25 66 0e 3a 53 6e 86 67',
  '94 66 50 3d 37 99 87 86 49 63 50 7f 7a 74 50 a5 7e 55 77 7e 7e e5 3b 85',
].flatMap((row) => row.split(' '))
const shade = (v: string): string => (v === '--' ? 'transparent' : `#${v}${v}${v}`)
</script>

<template>
  <div class="window">
    <header class="title">
      <span class="spacer"></span>
      <span v-fit="219" class="fit name">*Untitled Project — QGIS</span>
      <span class="wm">
        <i><svg viewBox="0 0 22 22"><path d="M7.500 14.500h7" /></svg></i>
        <i><svg viewBox="0 0 22 22"><path d="M7.500 9.500h5v5h-5zM9.500 9.500v-2h5v5h-2" /></svg></i>
        <i><svg viewBox="0 0 22 22"><path d="M7.500 7.500l7 7M14.500 7.500l-7 7" /></svg></i>
      </span>
    </header>

    <nav class="menu">
      <span v-for="m in menus" :key="m.pre + m.key + m.post" v-fit="m.w" class="fit">{{ m.pre }}<u>{{ m.key }}</u>{{ m.post }}</span>
    </nav>

    <div v-for="(bar, i) in toolbars" :key="i" class="toolbar">
      <template v-for="(tool, j) in bar" :key="j">
        <span v-if="tool.t === 'h' || tool.t === 'h0'" class="handle" :class="{ first: tool.t === 'h0' }"><i></i></span>
        <span v-else-if="tool.t === 's'" class="sep"></span>
        <span v-else-if="tool.t === 'a'" class="drop" :class="{ off: tool.off }"></span>
        <span v-else class="tool" :class="{ on: tool.on }">
          <svg viewBox="0 0 32 32" :class="{ off: tool.off }" v-html="icons[tool.icon ?? '']"></svg>
        </span>
      </template>
    </div>

    <main class="body">
      <aside class="docks">
        <section class="dock browser">
          <div class="head">
            <span v-fit="67" class="fit">Browser</span>
            <span class="winbtns">
              <svg viewBox="0 0 12 12"><rect x=".6" y=".6" width="10.800" height="10.800" rx="2" /><path d="M3 5.500h3.500V9H3zM5 5.500V3h4v4H6.500" /></svg>
              <svg viewBox="0 0 12 12"><rect x=".6" y=".6" width="10.800" height="10.800" rx="2" /><path d="M3 3l6 6M9 3l-6 6" stroke-width="2.200" /></svg>
            </span>
          </div>
          <div class="tools">
            <svg v-for="t in browserTools" :key="t.icon" viewBox="0 0 32 32" v-html="icons[t.icon]"></svg>
          </div>
          <div class="tree">
            <ul>
              <li v-for="n in nodes" :key="n.label">
                <span class="twist" :class="{ has: n.open }"></span>
                <svg viewBox="0 0 32 32" v-html="icons[n.icon]"></svg>
                <span v-fit="n.w" class="fit">{{ n.label }}</span>
              </li>
            </ul>
            <div class="scroll">
              <span class="sbtn"><i class="up"></i></span>
              <span class="thumb"></span>
              <span class="groove"></span>
              <span class="sbtn down"><i class="dn"></i></span>
            </div>
          </div>
        </section>

        <div class="split"><i></i></div>

        <section class="dock layers">
          <div class="head">
            <span v-fit="53" class="fit">Layers</span>
            <span class="winbtns">
              <svg viewBox="0 0 12 12"><rect x=".6" y=".6" width="10.800" height="10.800" rx="2" /><path d="M3 5.500h3.500V9H3zM5 5.500V3h4v4H6.500" /></svg>
              <svg viewBox="0 0 12 12"><rect x=".6" y=".6" width="10.800" height="10.800" rx="2" /><path d="M3 3l6 6M9 3l-6 6" stroke-width="2.200" /></svg>
            </span>
          </div>
          <div class="tools">
            <template v-for="(t, k) in layerTools" :key="k">
              <span v-if="!t.icon" class="drop off mini"></span>
              <svg v-else viewBox="0 0 32 32" :class="{ off: t.off }" v-html="icons[t.icon]"></svg>
            </template>
          </div>
          <div class="legend">
            <div class="layer">
              <i class="dn dark"></i>
              <span class="check"><svg viewBox="0 0 17 17"><path d="M4 8.500l3.300 4.500L13.500 3.500" /></svg></span>
              <svg class="ras" viewBox="0 0 32 32" v-html="icons.raster"></svg>
              <span v-fit="35" class="fit lname">sol1</span>
            </div>
            <div class="band"><span v-fit="108" class="fit">Band 1 (Gray)</span></div>
            <div class="ramp">
              <span class="bar"></span>
              <span class="lim"><span v-fit="30" class="fit">117</span><span v-fit="27" class="fit">-90</span></span>
            </div>
          </div>
        </section>
      </aside>

      <div class="vsplit"><i></i></div>

      <div class="map">
        <div class="raster">
          <span v-for="(v, k) in cells" :key="k" :style="{ background: shade(v) }"></span>
        </div>
      </div>
    </main>

    <footer class="status">
      <div class="search">
        <svg viewBox="0 0 18 18"><circle cx="7.500" cy="7.500" r="5" /><path d="M11.300 11.300l5 5" /></svg>
        <span v-fit="182" class="fit">Type to locate (Ctrl+K)</span>
      </div>
      <span v-fit="76" class="fit lab coord">Coordinate</span>
      <div class="field cfield"><span v-fit="96.500" class="fit">50,089° 4,445°</span></div>
      <svg class="mouse" viewBox="0 0 20 22"><path d="M2 4l6-4 4 2 3 8-6 4-5-4z" fill="#222" /><path d="M4 5l4 6M7 3l4 6M10 2l3 6" stroke="#fff" stroke-width="1.300" /><path d="M6 11l6-3 5 4 1 5-5 3-5-1z" fill="#fff" stroke="#222" stroke-width="1.700" /><circle cx="12.500" cy="15.500" r="2" fill="#fff" stroke="#222" /><path d="M14 4l4-3M15 7l3-1M1 13l3-1M2 17l5 1" stroke="#333" stroke-width="1.200" stroke-dasharray="1.500 1" /></svg>
      <span v-fit="36" class="fit lab scale">Scale</span>
      <div class="field combo"><span v-fit="62" class="fit">1:852005</span><b><i class="dn"></i></b></div>
      <svg class="lock" viewBox="0 0 16 20"><path d="M3.500 10V5.500a4.500 4.500 0 0 1 9 0V10" fill="none" stroke="#777" stroke-width="2.600" /><path d="M3.500 10V5.500a4.500 4.500 0 0 1 9 0V10" fill="none" stroke="#eee" stroke-width=".8" /><rect x=".5" y="9" width="15" height="10.500" rx="1" fill="#636363" /></svg>
      <span v-fit="66" class="fit lab mag">Magnifier</span>
      <div class="field spin s1"><span v-fit="38" class="fit">100%</span><b><i class="up"></i><i class="dn"></i></b></div>
      <span v-fit="60" class="fit lab rot">Rotation</span>
      <div class="field spin s2"><span v-fit="30" class="fit">0,0 °</span><b><i class="up"></i><i class="dn"></i></b></div>
      <span class="check render"><svg viewBox="0 0 17 17"><path d="M4 8.500l3.300 4.500L13.500 3.500" /></svg></span>
      <span v-fit="50" class="fit lab">Render</span>
      <svg class="crs" viewBox="0 0 20 18"><path d="M6 1h8l6 7-4 6-3 3H7l-3-3-4-6z" fill="#6a6a6a" /><path d="M2 5.500h16M0 9h20M3 12.500h14M10 1v16M6.500 1.500c-3 5-2 11 1 15M13.500 1.500c3 5 2 11-1 15" fill="none" stroke="#eee" stroke-width=".9" /></svg>
      <span v-fit="73" class="fit lab epsg">EPSG:4326</span>
      <svg class="msg" viewBox="0 0 20 19"><path d="M10 .5c5.500 0 9.700 3.300 9.700 7.700 0 2.600-1.200 4.700-3.200 6.100l1.800 4.200-6.200-2.700c-6.500.6-11.800-2.600-11.800-7.600C.3 3.800 4.500.5 10 .5z" fill="#5b5b5b" /><g fill="#fff"><circle cx="5.500" cy="8.200" r="1.400" /><circle cx="10" cy="8.200" r="1.400" /><circle cx="14.500" cy="8.200" r="1.400" /></g></svg>
    </footer>
  </div>
</template>

<style>
body { margin: 0; overflow: hidden; }
</style>

<style scoped>
* { box-sizing: border-box; }
.window {
  width: 1848px; height: 1048px; display: flex; flex-direction: column;
  background: #efefef; color: #000; border-left: 1px solid #b9b9b9; border-bottom: 1px solid #b9b9b9;
  font: 17.6px/23px "Noto Sans", "Open Sans", sans-serif; overflow: hidden;
}
.fit { display: inline-block; white-space: pre; transform-origin: 0 50%; flex: none; }
svg { display: block; flex: none; overflow: visible; }

.title { height: 38px; flex: none; display: flex; align-items: center; background: #ebebeb; border-top: 1px solid #bebebe; border-bottom: 1px solid #b8b8b8; box-shadow: inset 0 1px #fafafa; }
.spacer { width: 813px; }
.name { font-weight: 700; color: #3d3d3d; }
.wm { display: flex; gap: 12px; margin-left: auto; padding-right: 8px; }
.wm i { width: 22px; height: 22px; border-radius: 50%; background: #d9d9d9; }
.wm path { fill: none; stroke: #3a3a3a; stroke-width: 1.2; }

.menu { height: 26px; flex: none; display: flex; gap: 15.15px; padding: 1px 0 0 11px; border-bottom: 1px solid #d0d0d0; }
.menu u { text-decoration-thickness: 2px; text-underline-offset: 2px; text-decoration-skip-ink: none; }

.toolbar { height: 47px; flex: none; display: flex; align-items: center; background: linear-gradient(#f8f8f8, #ececec); border-bottom: 1px solid #b5b5b5; margin-left: -1px; padding-left: 1px; }
.toolbar + .toolbar { height: 48px; border-bottom-width: 2px; }
.handle { width: 18px; height: 18px; flex: none; padding-left: 9px; }
.handle.first { width: 14.5px; padding-left: 6px; }
.handle i, .vsplit i, .split i { display: block; background-image: conic-gradient(from 90deg at 1px 1px, transparent 270deg, #b4b4b4 0); background-size: 3px 3px; }
.handle i { width: 4px; height: 16px; }
.tool { width: 41px; height: 39px; flex: none; display: flex; align-items: center; justify-content: center; }
.tool svg { width: 32px; height: 32px; }
.tool.on { box-shadow: inset 0 0 0 1px #ababab; border-radius: 3px; background: #d9d9d9; width: 39px; margin: 0 1px; }
svg.off { opacity: .34; filter: grayscale(.5); }
.drop { width: 15px; flex: none; display: flex; padding-left: 1.5px; }
.drop::after { content: ""; border: 5px solid transparent; border-top-color: #444; border-bottom: 0; }
.drop.off::after { border-top-color: #c9c9c9; }
.sep { width: 8px; height: 27px; flex: none; }
.sep::after { content: ""; display: block; width: 1px; height: 27px; margin-left: 3px; background: #cbcbcb; }

.body { flex: 1; min-height: 0; display: flex; }
.docks { width: 294px; display: flex; flex-direction: column; flex: none; }
.head { display: flex; justify-content: space-between; align-items: center; height: 21px; padding: 0 1.5px 0 4px; }
.winbtns { display: flex; gap: 2px; }
.winbtns svg { width: 12px; height: 12px; fill: none; stroke: #666; stroke-width: 1.1; }
.tools { display: flex; gap: 11px; padding-left: 9px; align-items: center; }
.tools svg { width: 22px; height: 22px; }
.tools .mini { width: 13px; margin: 0 -4px 0 -5px; }
.browser { height: 423px; display: flex; flex-direction: column; }
.browser .tools { height: 40px; }
.tree { flex: 1; min-height: 0; display: flex; background: #fff; border: 1px solid #b5b5b5; border-left: 0; }
.tree ul { flex: 1; margin: 0; padding: 0; list-style: none; overflow: hidden; }
.tree li { height: 23px; display: flex; align-items: center; }
.tree li svg { width: 19px; height: 19px; margin-right: 7px; }
.twist { width: 20px; height: 10px; padding-left: 6px; flex: none; }
.twist.has::after { content: ""; display: block; width: 0; border: 5px solid transparent; border-left-color: #5a5a5a; border-right: 0; }
.scroll { width: 17px; flex: none; display: flex; flex-direction: column; border-left: 1px solid #b9b9b9; background: linear-gradient(90deg, #fff, #efefef); }
.sbtn { height: 17px; display: flex; align-items: center; justify-content: center; border-bottom: 1px solid #b9b9b9; }
.sbtn.down { border: 0; }
.thumb { flex: 1; }
.groove { height: 22px; background: #e2e2e2; border: solid #b9b9b9; border-width: 1px 0; }
i.up, i.dn { width: 0; height: 0; border: 5px solid transparent; }
i.up { border-bottom-color: #555; border-top: 0; }
i.dn { border-top-color: #555; border-bottom: 0; }
.split { height: 8px; flex: none; padding: 3px 0 0 139px; }
.split i { width: 17px; height: 2px; }
.layers { flex: 1; min-height: 0; display: flex; flex-direction: column; }
.layers .tools { height: 40px; padding-bottom: 1px; }
.legend { flex: 1; background: #fff; border: 1px solid #b5b5b5; border-left: 0; }
.layer { height: 23px; display: flex; align-items: center; background: #308cc6; padding-left: 7px; margin-left: 1px; color: #fff; font-weight: 700; }
.layer .dark { border-top-color: #123a56; }
.check { width: 17px; height: 17px; background: #fff; border: 1px solid #b0b0b0; flex: none; margin-left: 11px; }
.check svg { width: 15px; height: 15px; }
.check path { fill: none; stroke: #000; stroke-width: 2.2; }
.ras { width: 17px; height: 17px; margin: 0 7px 0 8px; }
.lname { text-decoration: underline; text-decoration-thickness: 2px; text-underline-offset: 3px; text-decoration-skip-ink: none; }
.band { padding-left: 54px; height: 22px; line-height: 21px; }
.ramp { display: flex; padding-left: 54px; gap: 9px; }
.bar { width: 16px; height: 96px; background: linear-gradient(#fff, #000); }
.lim { display: flex; flex-direction: column; justify-content: space-between; height: 98px; margin-top: -1px; }
.vsplit { width: 8px; flex: none; border-right: 1px solid #b5b5b5; padding: 419px 0 0 3px; }
.vsplit i { width: 2px; height: 17px; }
.map { flex: 1; background: #fff; border-right: 1px solid #b5b5b5; padding: 99px 0 0 178.9px; }
.raster { display: grid; grid-template-columns: repeat(24, 45.17px); grid-auto-rows: 45.22px; }

.status { height: 36px; flex: none; border-top: 1px solid #b5b5b5; display: flex; align-items: center; font-size: 15.3px; line-height: 20px; padding-left: 4px; }
.search { width: 327px; height: 28px; background: #fff; border: 1px solid #b5b5b5; border-radius: 3px; display: flex; align-items: center; font-size: 17.6px; line-height: 22px; color: #7b7b7b; padding-left: 9px; gap: 6px; }
.search svg { width: 18px; height: 18px; fill: none; stroke: #777; stroke-width: 1.4; }
.lab.coord { margin-left: 503px; }
.field { height: 26px; background: #fff; border: 1px solid #b0b0b0; border-radius: 3px; display: flex; align-items: center; padding-left: 4px; margin-left: 3px; }
.cfield { width: 110px; }
.mouse { width: 20px; height: 22px; margin: 0 13.5px 2px 2px; }
.combo { width: 117px; height: 29px; padding-left: 3.5px; }
.field b { margin-left: auto; align-self: stretch; display: flex; align-items: center; justify-content: center; background: #f5f5f5; }
.combo b { width: 28px; }
.lock { width: 16px; height: 20px; margin: 0 9px 0 11px; }
.spin b { width: 17px; flex-direction: column; gap: 6px; border-left: 1px solid #b0b0b0; background: #fafafa; }
.spin { height: 28px; }
.s1 { width: 106px; }
.rot { margin-left: 9.5px; }
.s2 { width: 102.5px; margin-left: 9px; }
.render { margin: 0 6px 0 5.5px; }
.crs { width: 20px; height: 18px; margin: 0 2px 0 14px; }
.msg { width: 20px; height: 19px; margin-left: 23.5px; }
</style>
